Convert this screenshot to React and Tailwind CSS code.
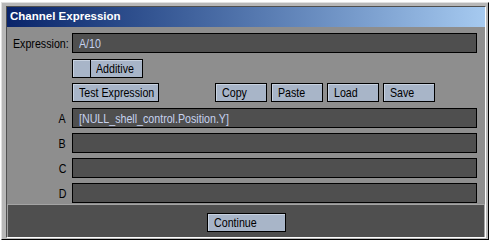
import React from 'react';

const font = { fontFamily: '"Liberation Sans", Arial, sans-serif' };

// LightWave panels use a narrow face; squeeze Arial-width text horizontally
const Narrow = ({ children, origin = 'origin-left' }) => (
  <span className={'inline-block whitespace-nowrap scale-x-[0.82] text-[13px] leading-none ' + origin}>{children}</span>
);

const Btn = ({ children, className = '', center = false }) => (
  <div
    className={
      'flex h-[19px] items-center border border-black bg-[#a8b5c8] text-black shadow-[inset_1px_1px_0_#c8d2e0] ' +
      (center ? 'justify-center ' : 'pl-[6px] ') +
      className
    }
  >
    <Narrow origin={center ? 'origin-center' : 'origin-left'}>{children}</Narrow>
  </div>
);

const Field = ({ value }) => (
  <div className="flex h-[20px] flex-1 items-center border border-black bg-[#4f4f4f] pl-[6px] text-[#c6d2ee]">
    <Narrow>{value}</Narrow>
  </div>
);

const ChannelRow = ({ label, value }) => (
  <div className="flex h-[20px] items-center">
    <div className="flex w-[59px] items-center justify-end text-black">
      <Narrow origin="origin-right">{label}</Narrow>
    </div>
    <div className="ml-[6px] flex flex-1">
      <Field value={value} />
    </div>
  </div>
);

export default function App() {
  return (
    <div className="h-[247px] w-[492px] bg-white pt-[2px] pl-[1px]" style={font}>
      {/* outer window frame */}
      <div className="h-[238px] w-[488px] border border-t-[#e0e0e0] border-l-[#e0e0e0] border-r-black border-b-black bg-[#b8b8b8] pt-[3px] pl-[4px] pr-[2px] pb-[1px]">
        <div className="flex h-full flex-col border border-t-[#505050] border-l-[#505050] border-r-white border-b-white">
          {/* title bar */}
          <div className="flex h-[20px] items-center bg-gradient-to-r from-[#0a246a] to-[#a6caf0] pl-[3px]">
            <span className="text-[11.5px] font-bold leading-none text-white">Channel Expression</span>
          </div>

          {/* body */}
          <div className="flex flex-1 flex-col bg-[#8e8e8e]">
            <div className="flex h-[177px] flex-col pt-[6px] pr-[8px]">
              <div className="flex h-[20px] items-center">
                <div className="flex w-[65px] items-center pl-[6px] text-black">
                  <Narrow>Expression:</Narrow>
                </div>
                <Field value="A/10" />
              </div>

              <div className="mt-[6px] ml-[65px] flex">
                <div className="flex h-[19px] w-[71px] border border-black bg-[#a8b5c8] shadow-[inset_1px_1px_0_#c8d2e0]">
                  <div className="w-[20px] border-r border-black" />
                  <div className="flex items-center pl-[5px] text-black">
                    <Narrow>Additive</Narrow>
                  </div>
                </div>
              </div>

              <div className="mt-[5px] ml-[65px] flex">
                <Btn className="w-[87px]">Test Expression</Btn>
                <div className="ml-[56px] flex gap-[4px]">
                  <Btn className="w-[52px]">Copy</Btn>
                  <Btn className="w-[52px]">Paste</Btn>
                  <Btn className="w-[52px]">Load</Btn>
                  <Btn className="w-[52px]">Save</Btn>
                </div>
              </div>

              <div className="mt-[6px] flex flex-col gap-[5px]">
                <ChannelRow label="A" value="[NULL_shell_control.Position.Y]" />
                <ChannelRow label="B" value="" />
                <ChannelRow label="C" value="" />
                <ChannelRow label="D" value="" />
              </div>
            </div>

            {/* bottom bar */}
            <div className="flex h-[33px] justify-center border-x border-t border-[#a4a4a4] bg-[#4f4f4f] pt-[8px]">
              <Btn className="w-[79px]">Continue</Btn>
            </div>
          </div>
        </div>
      </div>
    </div>
  );
}
